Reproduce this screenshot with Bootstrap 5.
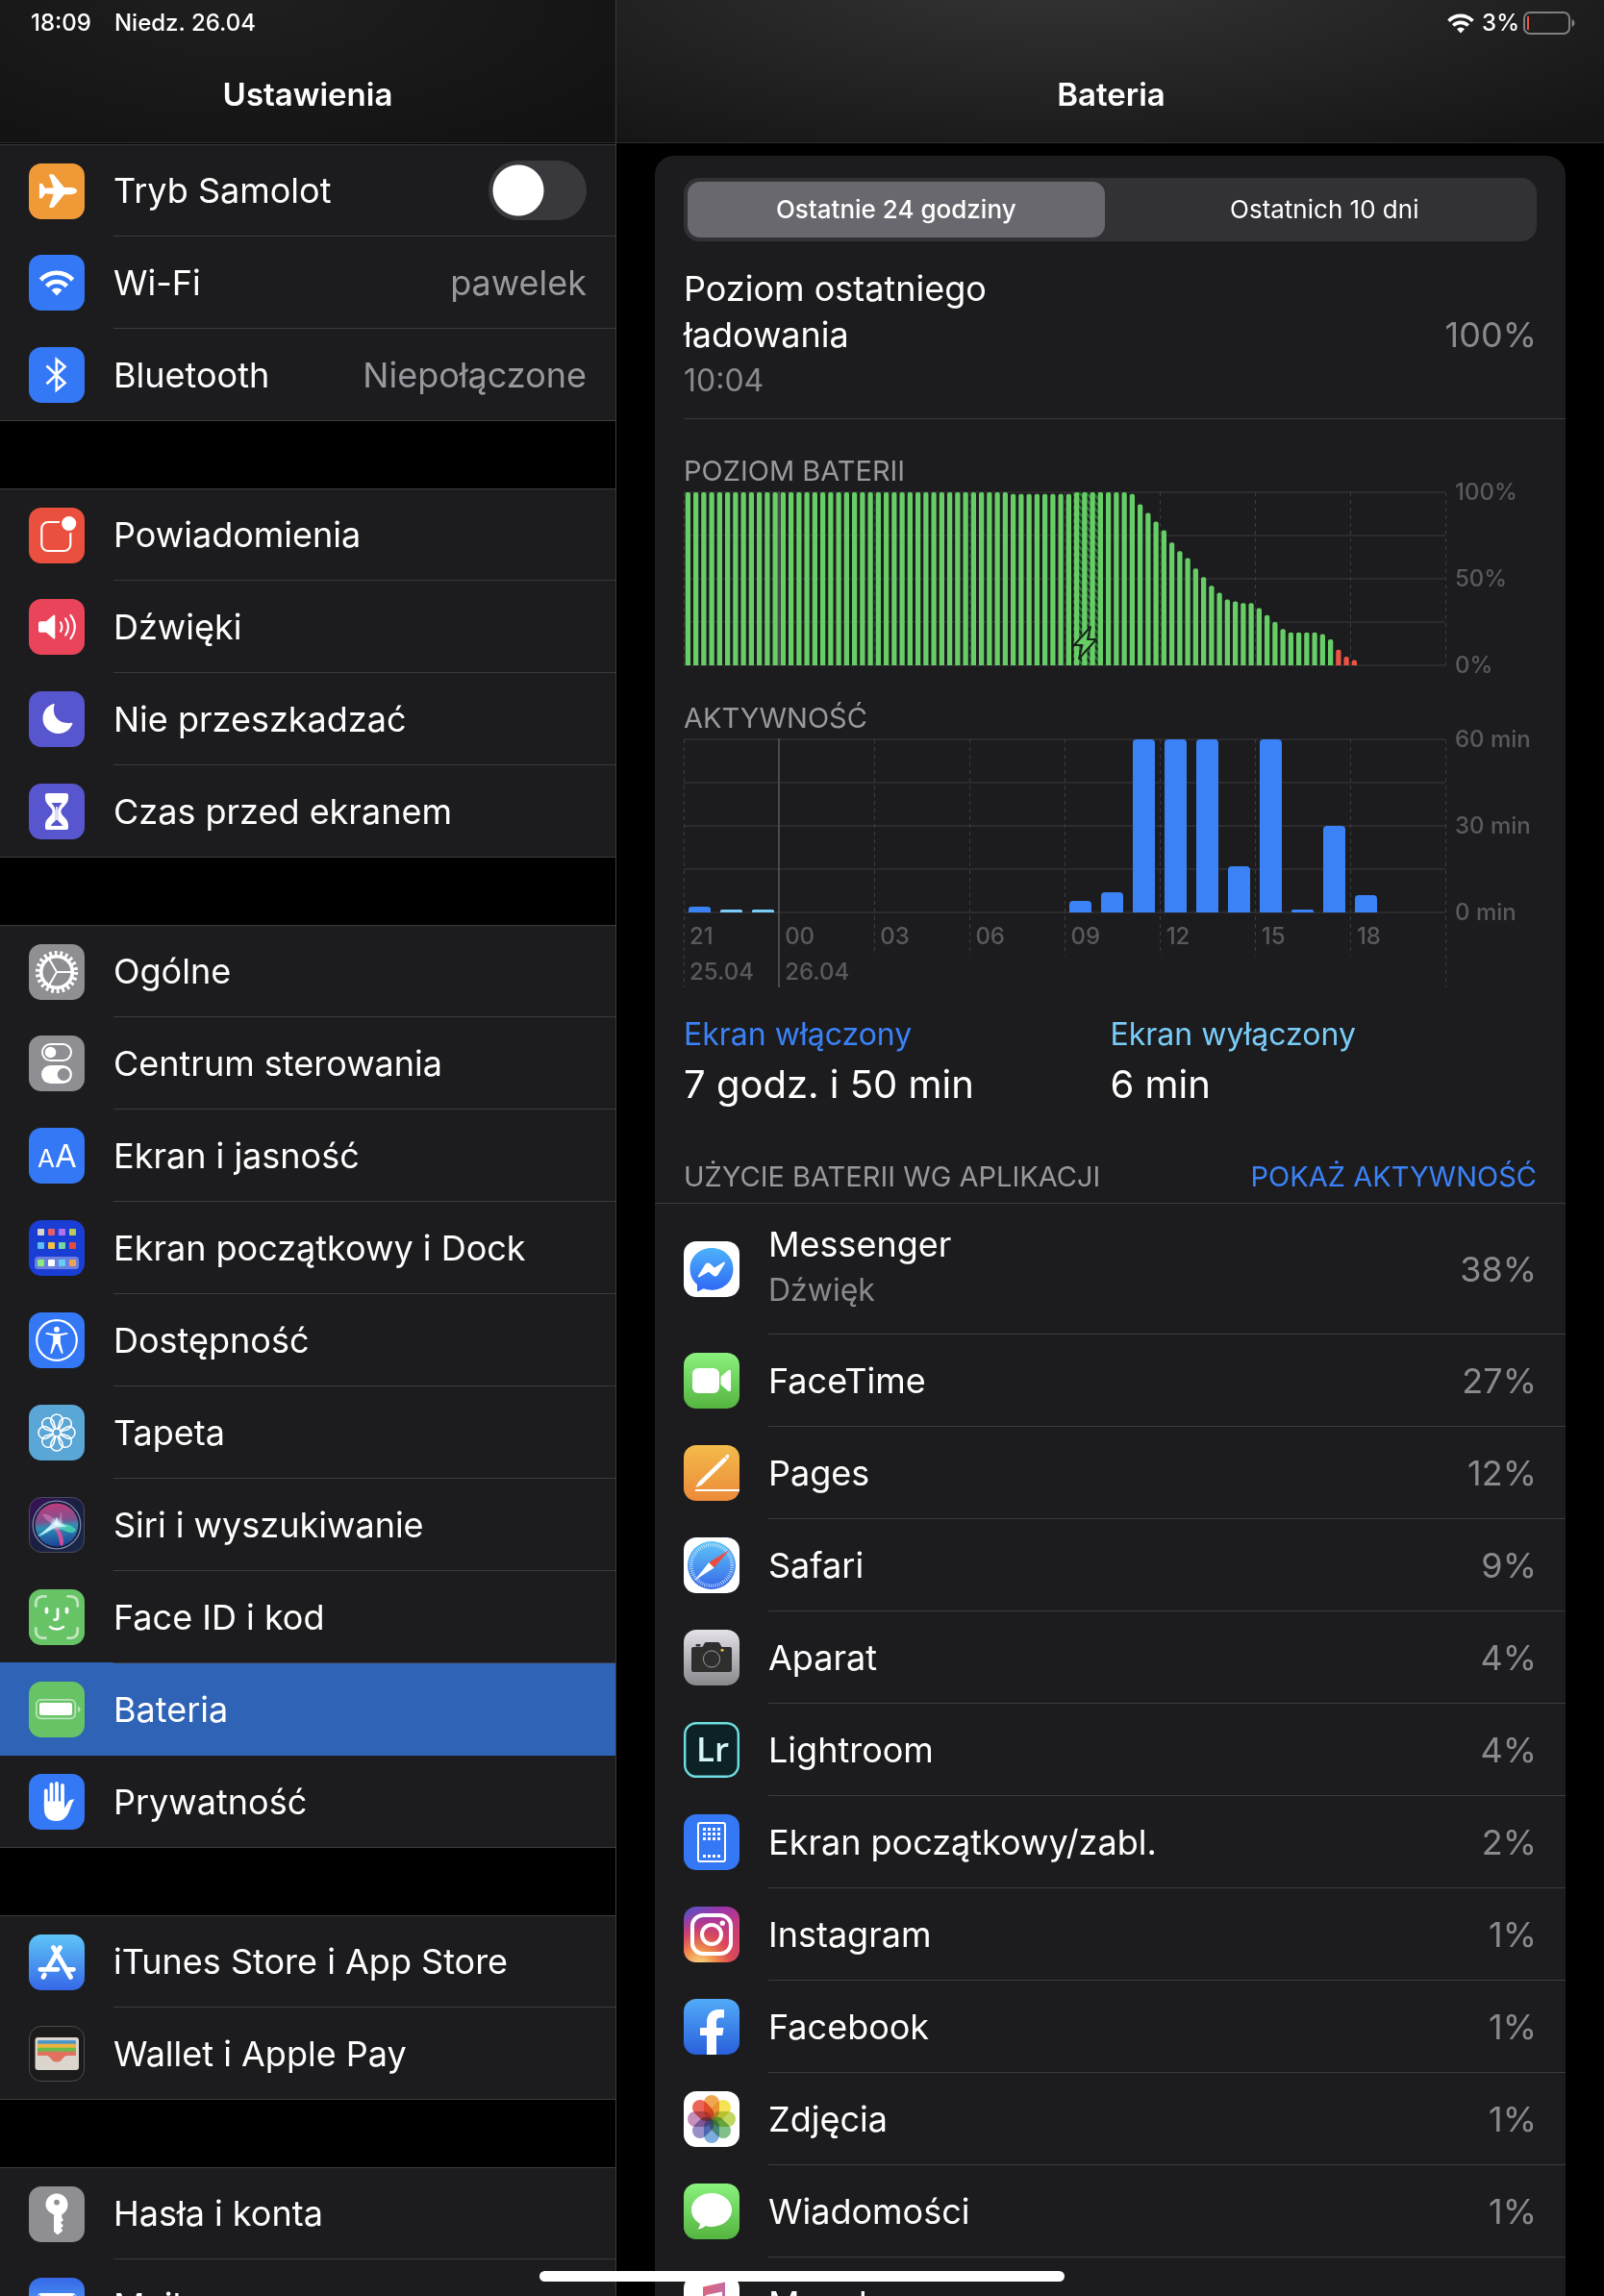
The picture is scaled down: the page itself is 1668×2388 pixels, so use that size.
<!DOCTYPE html>
<html lang="pl" data-bs-theme="dark">
<head>
<meta charset="utf-8">
<meta name="viewport" content="width=device-width, initial-scale=1">
<title>Ustawienia – Bateria</title>
<link href="https://cdn.jsdelivr.net/npm/bootstrap@5.3.0/dist/css/bootstrap.min.css" rel="stylesheet">
<style>
  :root { --line: #3b3b3d; --panel: #1c1c1e; --muted: #98989f; --dim: #8a8a8c; --blue: #3b82f7; --sky: #7accf8; --axis: #5a5a5d; }
  body { background: #000; color: #fff; font-family: Inter, "Liberation Sans", sans-serif; font-size: 36px; line-height: 48px; }
  a, a:hover { color: inherit; text-decoration: none; }

  .pane-side { flex: 0 0 38.43%; border-right: 1px solid var(--line); }
  .top-bar { border-bottom: 1px solid #2b2b2c; padding: 8px 30px 28px 32px; }
  .top-side { background: radial-gradient(ellipse at 40% 0, #1f1f1f, #121212 90%); padding-right: 32px; margin-bottom: 1px; }
  .top-main { background: radial-gradient(ellipse 75% 150% at 45% -20%, #353535, #151515); }
  .status-line { font-size: 24px; line-height: 32px; font-weight: 500; height: 32px; }
  .top-title { font-size: 33px; line-height: 44px; font-weight: 600; margin: 36px 0 0; }

  .tile { width: 58px; height: 58px; flex: none; }
  .settings-group { background: var(--panel); margin-bottom: 70px; }
  .set-row { display: flex; align-items: stretch; gap: 30px; min-height: 96px; padding-left: 30px; color: #fff; }
  .set-row .tile { align-self: center; }
  .set-body { flex: 1; display: flex; align-items: center; justify-content: space-between; padding-right: 30px; border-bottom: 1px solid var(--line); min-width: 0; }
  .settings-group .set-row:first-child { border-top: 1px solid var(--line); }
  .settings-group .set-row:last-child { border-bottom: 1px solid var(--line); }
  .settings-group .set-row:last-child .set-body { border-bottom: 0; }
  .set-row.current { background: #2e63b6; box-shadow: 0 -1px 0 #2e63b6; }
  .set-row.current .set-body { border-color: #2e63b6; }
  .side-value { color: var(--muted); }
  .form-check-input.plane-switch { width: 102px; height: 62px; margin: 0; float: none; border: 0; border-radius: 31px; background-color: #39393d;
    background-image: radial-gradient(circle at 31px 50%, #fff 26px, transparent 27px); background-size: 100% 100%; background-position: 0 0; }

  .main-scroll { padding: 13px 40px 0; }
  .battery-card { background: var(--panel); border-radius: 20px 20px 0 0; padding-top: 23px; }
  .period { background: #323236; border-radius: 16px; padding: 4px; gap: 12px; margin: 0 30px; height: 66px; }
  .period .btn { flex: 1 1 0; border: 0; border-radius: 13px; font-size: 26px; line-height: 34px; padding: 12px 0; color: #fff; }
  .period .btn-check:checked + .btn { background: #69686e; font-weight: 500; }
  .last-charge { margin-left: 30px; padding: 25px 30px 15px 0; border-bottom: 1px solid var(--line); }
  .dim { color: var(--dim); }
  .sub { font-size: 32px; line-height: 44px; }
  .sub.dim { line-height: 48px; }
  .screen-on { color: var(--blue); }
  .screen-off { color: var(--sky); }
  .caption { font-size: 29px; line-height: 42px; color: var(--muted); font-weight: 400; margin: 0; }
  .chart-block { padding: 33px 30px 0; }
  .chart-plot { flex: 1; min-width: 0; }
  .chart-plot svg { display: block; width: 100%; }
  .level-svg { height: 182px; }
  .act-svg { height: 259px; margin-bottom: -77px; }
  .axis-text { font-size: 24px; line-height: 24px; font-weight: 500; color: var(--axis); }
  .y-axis { width: 94px; height: 204px; margin-top: -11px; margin-bottom: -11px; padding-left: 9px; white-space: nowrap; }
  .x-axis { display: grid; grid-template-columns: repeat(8, 1fr); padding-top: 5px; line-height: 37px; height: 79px; }
  .x-axis div { padding-left: 6px; white-space: nowrap; }
  .totals { padding: 25px 30px 0; }
  .big { font-size: 40px; line-height: 52px; margin-top: 4px; }
  .usage-head { padding: 49px 30px 6px; border-bottom: 1px solid var(--line); }
  .link-blue, .link-blue:hover { color: var(--blue); }
  .two-line { min-height: 136px; }
  .two-line .app-text { padding-bottom: 4px; }
  .home-bar { position: fixed; left: 50%; bottom: 15px; width: 546px; height: 11px; margin-left: -273px; border-radius: 6px; background: #fff; }
</style>
</head>
<body class="d-flex vh-100 overflow-hidden">

<svg width="0" height="0" class="position-absolute" aria-hidden="true">
  <defs>
    <linearGradient id="gStore" x1="0" y1="0" x2="0" y2="1"><stop offset="0" stop-color="#5fc5f8"/><stop offset="1" stop-color="#3668e8"/></linearGradient>
    <linearGradient id="gMail" x1="0" y1="0" x2="0" y2="1"><stop offset="0" stop-color="#3668e8"/><stop offset="1" stop-color="#5fc5f8"/></linearGradient>
    <linearGradient id="gGreen" x1="0" y1="0" x2="0" y2="1"><stop offset="0" stop-color="#8af27d"/><stop offset="1" stop-color="#55b440"/></linearGradient>
    <linearGradient id="gPages" x1="0" y1="0" x2="0" y2="1"><stop offset="0" stop-color="#f3bb4b"/><stop offset="1" stop-color="#ec8a39"/></linearGradient>
    <linearGradient id="gCam" x1="0" y1="0" x2="0" y2="1"><stop offset="0" stop-color="#e4e2e8"/><stop offset="1" stop-color="#88878c"/></linearGradient>
    <linearGradient id="gMess" x1="0" y1="0" x2="0" y2="1"><stop offset="0" stop-color="#4db2fa"/><stop offset="1" stop-color="#2f67f6"/></linearGradient>
    <linearGradient id="gFb" x1="0" y1="0" x2="0" y2="1"><stop offset="0" stop-color="#51abf8"/><stop offset="1" stop-color="#2a5fdc"/></linearGradient>
    <linearGradient id="gIg1" x1="0" y1="0" x2=".7" y2="1"><stop offset="0" stop-color="#5158c8"/><stop offset=".35" stop-color="#9c35a8"/><stop offset=".75" stop-color="#cf3f72"/><stop offset="1" stop-color="#d64a5a"/></linearGradient>
    <radialGradient id="gIg2" cx=".28" cy="1.05" r=".95"><stop offset="0" stop-color="#fadc86"/><stop offset=".3" stop-color="#f0914a"/><stop offset=".6" stop-color="#e04c55" stop-opacity=".8"/><stop offset="1" stop-color="#c0308a" stop-opacity="0"/></radialGradient>
    <linearGradient id="gMus" x1="0" y1="0" x2="1" y2="1"><stop offset="0" stop-color="#ee6460"/><stop offset="1" stop-color="#a070d8"/></linearGradient>
    <linearGradient id="gSiriBg" x1="0" y1="0" x2="1" y2="1"><stop offset="0" stop-color="#3a1058"/><stop offset=".5" stop-color="#182040"/><stop offset="1" stop-color="#1c2848"/></linearGradient>
    <linearGradient id="gSiri" x1=".4" y1="0" x2=".5" y2="1"><stop offset="0" stop-color="#c03c7c"/><stop offset=".4" stop-color="#80508e"/><stop offset=".55" stop-color="#2f8fb4"/><stop offset="1" stop-color="#1b3f98"/></linearGradient>
    <radialGradient id="gGlow"><stop offset="0" stop-color="#fff"/><stop offset=".35" stop-color="#d8f4ff" stop-opacity=".7"/><stop offset="1" stop-color="#a0e0ff" stop-opacity="0"/></radialGradient>
    <pattern id="hatch" width="7" height="7" patternUnits="userSpaceOnUse"><rect width="7" height="7" fill="#2f6a38"/><path d="M-1 -1L8 8M-1 6L1 8M6 -1L8 1" stroke="#16241a" stroke-width="2.4"/></pattern>
  </defs>

  <symbol id="i-plane" viewBox="0 0 58 58"><rect width="58" height="58" rx="13" fill="#f09a37"/><path fill="#fff" d="M50 28.600c0 2.200-3.200 3.600-6.500 3.600h-6.700L26.500 44.800c-.6.800-1.200 1.100-2 1.100h-2.400c-.8 0-1.100-.6-.8-1.400l4.500-12.600-8.800-.6-2.700 4.300c-.3.500-.7.700-1.200.700h-1.300c-.6 0-.9-.3-.9-1V21.800c0-.7.3-1 .9-1h1.300c.5 0 .9.200 1.200.700l2.700 4.300 8.800-.6-4.500-12.500c-.3-.8 0-1.400.8-1.400h2.400c.8 0 1.400.3 2 1.100l10.300 12.600h6.700c3.300 0 6.500 1.400 6.500 3.600z"/></symbol>
  <symbol id="i-wifi" viewBox="0 0 58 58"><rect width="58" height="58" rx="13" fill="#3478f6"/><g fill="none" stroke="#fff" stroke-width="4.600"><path d="M12.400 26.100a22.500 22.500 0 0 1 33.200 0"/><path d="M18.600 32.600a14.200 14.200 0 0 1 20.800 0"/></g><path fill="#fff" d="M29 42.500l-5.400-5.800a7.600 7.600 0 0 1 10.800 0z"/></symbol>
  <symbol id="i-bt" viewBox="0 0 58 58"><rect width="58" height="58" rx="13" fill="#3478f6"/><path fill="none" stroke="#fff" stroke-width="2.700" stroke-linejoin="miter" d="M18.500 19.500L37.500 37.200 28.800 44.500V13L37.500 20.300 18.500 38.200"/></symbol>
  <symbol id="i-notif" viewBox="0 0 58 58"><rect width="58" height="58" rx="13" fill="#eb4f3d"/><rect x="13.300" y="15" width="30" height="30" rx="6.500" fill="none" stroke="#fff" stroke-width="2.200"/><circle cx="41.700" cy="16.500" r="10" fill="#eb4f3d"/><circle cx="41.700" cy="16.500" r="7.600" fill="#fff"/></symbol>
  <symbol id="i-sound" viewBox="0 0 58 58"><rect width="58" height="58" rx="13" fill="#ea445a"/><path fill="#fff" d="M10 25.500c0-1.500.8-2.300 2.300-2.300H18l7.300-6.200c1-.9 2-.5 2 .8v22.400c0 1.300-1 1.700-2 .8L18 34.800h-5.700c-1.500 0-2.300-.8-2.300-2.300z"/><path fill="none" stroke="#fff" stroke-width="2.200" stroke-linecap="round" d="M33 24.300q2.800 4.700 0 9.400M38.200 20.500q5.600 8.500 0 17M43.500 17q8.600 12 0 24"/></symbol>
  <symbol id="i-moon" viewBox="0 0 58 58"><rect width="58" height="58" rx="13" fill="#5856ce"/><path fill="#fff" d="M25.600 13.100c.8-.2 1.200.3.900 1.200-2.600 9.400 2.500 20.300 17.800 18.400.9-.1 1.300.5 1 1.300C43 39.800 37.500 44 31 44c-9.300 0-16.500-7-16.500-15.800 0-7.200 4.600-13.200 11.100-15.100z"/></symbol>
  <symbol id="i-hour" viewBox="0 0 58 58"><rect width="58" height="58" rx="13" fill="#5856ce"/><path fill="#fff" d="M19.500 10h19c1.600 0 2.500.8 2.500 2.300v2.600c0 7-7.600 9.300-7.600 14.100S41 36.100 41 43.100v2.600c0 1.500-.9 2.300-2.500 2.300h-19c-1.600 0-2.500-.8-2.500-2.300v-2.600c0-7 7.600-9.300 7.600-14.100S17 21.900 17 14.900v-2.600c0-1.500.9-2.300 2.500-2.300z"/><path fill="#5856ce" d="M23.500 20h11c-1.400 2.600-4.300 4.500-4.300 9v8.500c0 2.500 3.200 2.500 4.900 6.500H22.900c1.700-4 4.900-4 4.900-6.500V29c0-4.500-2.900-6.400-4.300-9z"/><path stroke="#fff" stroke-width="1.600" d="M29 24v14"/></symbol>
  <symbol id="i-gear" viewBox="0 0 58 58"><rect width="58" height="58" rx="13" fill="#8e8e93"/><g fill="none" stroke="#fff"><circle cx="29" cy="29" r="19.800" stroke-width="4.600" stroke-dasharray="2.800 2.855"/><circle cx="29" cy="29" r="16.300" stroke-width="3.600"/><path stroke-width="2" d="M29 29h15M29 29l-7.500-13M29 29l-7.500 13"/></g></symbol>
  <symbol id="i-toggles" viewBox="0 0 58 58"><rect width="58" height="58" rx="13" fill="#8e8e93"/><rect x="14" y="9" width="30" height="17" rx="8.500" fill="none" stroke="#fff" stroke-width="2"/><circle cx="22.500" cy="17.500" r="5.800" fill="#fff"/><rect x="13" y="31" width="32" height="19" rx="9.500" fill="#fff"/><circle cx="36.200" cy="40.500" r="6.500" fill="#8e8e93"/></symbol>
  <symbol id="i-home" viewBox="0 0 58 58"><rect width="58" height="58" rx="13" fill="#1a3dd4"/><rect x="6" y="38" width="46" height="13" rx="3.500" fill="#6a80e0"/><g><rect x="9" y="9" width="7" height="7" rx="1" fill="#d8d4cc"/><rect x="20" y="9" width="7" height="7" rx="1" fill="#e85c66"/><rect x="31" y="9" width="7" height="7" rx="1" fill="#b070f0"/><rect x="42" y="9" width="7" height="7" rx="1" fill="#b9cc52"/><rect x="9" y="23" width="7" height="7" rx="1" fill="#5dbdf5"/><rect x="20" y="23" width="7" height="7" rx="1" fill="#f6c23e"/><rect x="31" y="23" width="7" height="7" rx="1" fill="#74d6a4"/><rect x="42" y="23" width="7" height="7" rx="1" fill="#e84b3c"/><rect x="9" y="41" width="7" height="7" rx="1" fill="#8aec7c"/><rect x="20" y="41" width="7" height="7" rx="1" fill="#fff"/><rect x="31" y="41" width="7" height="7" rx="1" fill="#64ccf5"/><rect x="42" y="41" width="7" height="7" rx="1" fill="#f0a050"/></g></symbol>
  <symbol id="i-access" viewBox="0 0 58 58"><rect width="58" height="58" rx="13" fill="#3478f6"/><circle cx="29" cy="29" r="20.800" fill="none" stroke="#fff" stroke-width="2.200"/><circle cx="29" cy="17.700" r="2.900" fill="#fff"/><path fill="#fff" d="M18.600 21l7.400 1.200h6l7.400-1.200c1.300-.2 1.600 1.500.4 1.800l-7 1.500v6.400l2.700 11c.3 1.300-1.400 1.700-1.800.6L29.900 33h-1.800l-3.800 9.300c-.5 1.100-2.100.7-1.800-.6l2.700-11v-6.400l-7-1.500c-1.200-.3-.9-2 .4-1.800z"/></symbol>
  <symbol id="i-wall" viewBox="0 0 58 58"><rect width="58" height="58" rx="13" fill="#59a6d7"/><g fill="none" stroke="#fff" stroke-width="1.600"><g id="pp"><path id="pt" d="M27 25.500L23 18.200A6.300 6.300 0 1 1 35 18.200L31 25.500"/><use href="#pt" transform="rotate(45 29 29)"/><use href="#pt" transform="rotate(90 29 29)"/><use href="#pt" transform="rotate(135 29 29)"/></g><use href="#pp" transform="rotate(180 29 29)"/><circle cx="29" cy="29" r="4"/></g></symbol>
  <symbol id="i-siri" viewBox="0 0 58 58"><rect x=".5" y=".5" width="57" height="57" rx="12.500" fill="url(#gSiriBg)" stroke="#4a4a5c"/><circle cx="29" cy="29" r="24.800" fill="#141c34" stroke="#7f86b0" stroke-width="1.300"/><circle cx="29" cy="29" r="22.500" fill="url(#gSiri)"/><path fill="#7fe6ee" opacity=".75" d="M29 27L9 40c3 3 12-5 20-9z"/><path fill="#4fdcb4" opacity=".75" d="M28 27c8 0 16 1 21 7-1 5-10 4-19-3z"/><path fill="#e84f98" opacity=".85" d="M27 27c4 6 10 12 9 22-1 3-4 2-4-1-1-7-3-13-7-18z"/><path fill="#f8a0cc" opacity=".4" d="M14 18c6-1 12 3 17 10L33 15c3 3 1 10 0 15-6 0-15-4-19-12z"/><path fill="#dff" opacity=".8" d="M11 40L27 25l2-4 2 5 9 5-11 0z"/><circle cx="29" cy="28" r="8" fill="url(#gGlow)"/></symbol>
  <symbol id="i-face" viewBox="0 0 58 58"><rect width="58" height="58" rx="13" fill="#67c466"/><g fill="none" stroke-linecap="round"><path stroke="#c0e6bf" stroke-width="2.800" d="M7.300 17.500V14.300a7 7 0 0 1 7-7h3.200M40.500 7.300h3.200a7 7 0 0 1 7 7v3.200M50.700 40.500v3.200a7 7 0 0 1-7 7h-3.200M17.500 50.700h-3.200a7 7 0 0 1-7-7v-3.200"/><path stroke="#fff" stroke-width="3.600" d="M18.500 20.200v3.600M39.500 20.200v3.600"/><path stroke="#fff" stroke-width="2.700" d="M30 20.500v9c0 1.500-1 2.200-3.500 2.200"/><path stroke="#fff" stroke-width="2.500" d="M22 39c4 3.400 10 3.400 14 0"/></g></symbol>
  <symbol id="i-batt" viewBox="0 0 58 58"><rect width="58" height="58" rx="13" fill="#67c466"/><rect x="7.800" y="18.800" width="40.500" height="19.500" rx="5" fill="none" stroke="#b8e3b7" stroke-width="1.800"/><rect x="11" y="22" width="34" height="13" rx="2" fill="#fff"/><path fill="#b8e3b7" d="M51 25.200c1.600.8 2.600 2 2.600 3.400s-1 2.600-2.600 3.400z"/></symbol>
  <symbol id="i-hand" viewBox="0 0 58 58"><rect width="58" height="58" rx="13" fill="#3478f6"/><g fill="none" stroke="#fff" stroke-width="3.800" stroke-linecap="round"><path d="M17.800 17.500V34M23.500 11v20M29 10v20M35 12v20"/></g><path fill="#fff" d="M15.900 28.500H37v7.300l4.300-7.200c1.200-2 3.700-2.500 6.200-2-2.400 3-3.500 6.600-5.200 11.200C39.800 44.500 36.500 49 28.500 49c-8 0-12.600-4.500-12.600-12.500z"/></symbol>
  <symbol id="i-store" viewBox="0 0 58 58"><rect width="58" height="58" rx="13" fill="url(#gStore)"/><g stroke="#fff" stroke-width="4.800" stroke-linecap="round" fill="none"><path d="M32.500 13.500L19.500 36M25.500 13.500L43.500 44.500M11.800 36.300H30M40 36.300H46.500M16.200 42L15 44.300"/></g></symbol>
  <symbol id="i-wallet" viewBox="0 0 58 58"><rect x=".5" y=".5" width="57" height="57" rx="12.500" fill="#1b1b1c" stroke="#4c4c4e"/><rect x="6.500" y="12" width="45.500" height="34" rx="3" fill="#dad6ce"/><path fill="#4c97c8" d="M9 18v-1.500q0-1.500 1.500-1.500h37q1.500 0 1.500 1.500V20H9z"/><path fill="#efb23f" d="M9 19.500q0-.7.800-.7h38.400q.8 0 .8.700V24H9z"/><path fill="#6bbb4b" d="M9 23.500q0-.7.800-.7h38.400q.8 0 .8.700V28H9z"/><path fill="#e2705f" d="M9 27.500q0-.7.800-.7h38.400q.8 0 .8.700V31H41c-3 0-4 .5-6 3.500-2 2.500-4 3-6 3s-4-.5-6-3c-2-3-3-3.500-6-3.500H9z"/></symbol>
  <symbol id="i-key" viewBox="0 0 58 58"><rect width="58" height="58" rx="13" fill="#8e8e93"/><path fill="#fff" fill-rule="evenodd" d="M29 7.500c6.400 0 11.500 5 11.500 11.500 0 4.800-2.600 8.400-6.200 10.200v3.300l1.700 2.400-3 2.900 3 3-2.600 2.700 2 2.500-5.400 4.500-4-3.500V29.200c-4.800-1.800-8.500-5.400-8.500-10.200C17.500 12.500 22.600 7.500 29 7.500zm0 6.200a2.900 2.900 0 1 0 0 5.800 2.900 2.900 0 0 0 0-5.800z"/></symbol>
  <symbol id="i-mail" viewBox="0 0 58 58"><rect width="58" height="58" rx="13" fill="url(#gMail)"/><rect x="9" y="16" width="40" height="27" rx="4" fill="#fff"/><path d="M10 18l19 16 19-16" fill="none" stroke="#4a90f0" stroke-width="1.600"/></symbol>

  <symbol id="i-mess" viewBox="0 0 58 58"><rect width="58" height="58" rx="13" fill="#fff"/><path fill="url(#gMess)" d="M29 7C16 7 6.500 16.500 6.500 28.500c0 7 2.700 12.500 7.500 16.500v6.300c0 .8.700 1 1.300.7l5.200-2.700c2.700.9 5.500 1.400 8.500 1.400 13 0 22.500-9.500 22.500-22S42 7 29 7z"/><path fill="#fff" d="M15 36l7.400-12c1.200-1.800 3.500-2 5-.8l4.500 4.200 9.500-5.600c1-.6 2 .4 1.400 1.300L35.500 35c-1.200 1.700-3.300 2-4.800.7l-4.800-4-9.500 5.500c-1 .6-2-.3-1.400-1.200z"/></symbol>
  <symbol id="i-ft" viewBox="0 0 58 58"><rect width="58" height="58" rx="13" fill="url(#gGreen)"/><rect x="9" y="16" width="28" height="26" rx="6" fill="#fff"/><path fill="#fff" d="M38.500 25l7.300-6.500c1.600-1.400 3.200-.7 3.200 1.200v18.600c0 1.900-1.600 2.600-3.200 1.200L38.500 33z"/></symbol>
  <symbol id="i-pages" viewBox="0 0 58 58"><rect width="58" height="58" rx="13" fill="url(#gPages)"/><path fill="#fff" d="M12 46h46v2H12zM12.300 44l3-5.500L42 12.400l3.200 3.200L18.600 41.500z"/><path fill="#fff" d="M42.700 11.700l1.500-1.400c1-.9 2-.8 2.600-.2.700.7.800 1.700-.2 2.700L45.900 15z"/></symbol>
  <symbol id="i-safari" viewBox="0 0 58 58"><rect width="58" height="58" rx="13" fill="#fff"/><circle cx="29" cy="29" r="25" fill="url(#gStore)"/><circle cx="29" cy="29" r="21.300" fill="none" stroke="#e4f2fd" stroke-width="3.600" stroke-dasharray=".7 1.530"/><path fill="#fff" d="M11 45L26.300 26l5.400 5.400z"/><path fill="#ea4d3d" d="M47.500 13L26.300 26l5.400 5.400z"/></symbol>
  <symbol id="i-cam" viewBox="0 0 58 58"><rect width="58" height="58" rx="13" fill="url(#gCam)"/><path fill="#2e2e2f" d="M10 18h8.500c1.500 0 2-2.200 3.200-4 .5-.8 1.200-1 2-1h11.600c.8 0 1.500.2 2 1 1.200 1.800 1.700 4 3.200 4H48q2 0 2 2v22q0 2-2 2H10q-2 0-2-2V20q0-2 2-2z"/><rect x="12.500" y="15" width="5" height="2.400" rx="1" fill="#2e2e2f"/><circle cx="29" cy="30.500" r="8.600" fill="none" stroke="#9a9a9c" stroke-width="1"/><circle cx="40" cy="21.300" r="1.500" fill="#f2c53d"/></symbol>
  <symbol id="i-lock" viewBox="0 0 58 58"><rect width="58" height="58" rx="13" fill="#3478f6"/><rect x="15" y="9" width="28" height="40" rx="2" fill="none" stroke="#fff" stroke-width="2"/><g stroke="#fff" stroke-width="3" stroke-dasharray="3 2"><path d="M20 15.500h18M20 20.500h18M20 25.500h18M20 43.500h18"/></g></symbol>
  <symbol id="i-ig" viewBox="0 0 58 58"><rect width="58" height="58" rx="13" fill="url(#gIg1)"/><rect width="58" height="58" rx="13" fill="url(#gIg2)"/><g fill="none" stroke="#fff" stroke-width="4"><rect x="9" y="9" width="40" height="40" rx="11"/><circle cx="29" cy="29" r="10"/></g><circle cx="40.300" cy="17.300" r="2.700" fill="#fff"/></symbol>
  <symbol id="i-fb" viewBox="0 0 58 58"><rect width="58" height="58" rx="13" fill="url(#gFb)"/><path fill="#fff" d="M24 58V38h-7v-8h7v-5.500C24 16 29 11 36.500 11H42v8.500h-4c-2.700 0-4 1.300-4 3.800V30h7.500l-1.200 8H34v20z"/></symbol>
  <symbol id="i-photos" viewBox="0 0 58 58"><rect width="58" height="58" rx="13" fill="#fff"/><g opacity=".88" style="isolation:isolate"><rect x="21" y="4" width="16" height="25" rx="8" fill="#f09a3a" style="mix-blend-mode:multiply"/><rect x="21" y="4" width="16" height="25" rx="8" fill="#f3e13e" transform="rotate(45 29 29)" style="mix-blend-mode:multiply"/><rect x="21" y="4" width="16" height="25" rx="8" fill="#b9d24a" transform="rotate(90 29 29)" style="mix-blend-mode:multiply"/><rect x="21" y="4" width="16" height="25" rx="8" fill="#6fb878" transform="rotate(135 29 29)" style="mix-blend-mode:multiply"/><rect x="21" y="4" width="16" height="25" rx="8" fill="#6aa2d8" transform="rotate(180 29 29)" style="mix-blend-mode:multiply"/><rect x="21" y="4" width="16" height="25" rx="8" fill="#8a80c0" transform="rotate(225 29 29)" style="mix-blend-mode:multiply"/><rect x="21" y="4" width="16" height="25" rx="8" fill="#c080b4" transform="rotate(270 29 29)" style="mix-blend-mode:multiply"/><rect x="21" y="4" width="16" height="25" rx="8" fill="#e8503e" transform="rotate(315 29 29)" style="mix-blend-mode:multiply"/></g></symbol>
  <symbol id="i-msg" viewBox="0 0 58 58"><rect width="58" height="58" rx="13" fill="url(#gGreen)"/><path fill="#fff" d="M29 10C17.400 10 8 17.800 8 27.500c0 6 3.600 11.200 9 14.300-.2 2.200-.9 4-2.200 5.400 3.200.2 5.800-1 7.700-3.200 2 .6 4.200.9 6.500.9 11.600 0 21-7.800 21-17.400S40.600 10 29 10z"/></symbol>
  <symbol id="i-music" viewBox="0 0 58 58"><rect width="58" height="58" rx="13" fill="#fff"/><path fill="url(#gMus)" d="M20 11.500L43 6.500V38c0 7-10 8.500-10 2.500 0-3.500 3-4.500 7-5.300V16.500l-17 3.500v23c0 7-10 8.500-10 2.500 0-3.500 3-4.500 7-5.300z"/></symbol>
</svg>

<aside class="pane-side d-flex flex-column overflow-hidden">
  <header class="top-bar top-side flex-shrink-0">
    <div class="status-line d-flex"><span>18:09</span><span class="ms-4">Niedz. 26.04</span></div>
    <h1 class="top-title text-center">Ustawienia</h1>
  </header>
  <nav>
    <div class="settings-group">
      <div class="set-row"><svg class="tile"><use href="#i-plane"/></svg><div class="set-body"><label for="plane">Tryb Samolot</label><input class="form-check-input plane-switch" type="checkbox" role="switch" id="plane"></div></div>
      <a class="set-row" href="#"><svg class="tile"><use href="#i-wifi"/></svg><span class="set-body"><span>Wi-Fi</span><span class="side-value">pawelek</span></span></a>
      <a class="set-row" href="#"><svg class="tile"><use href="#i-bt"/></svg><span class="set-body"><span>Bluetooth</span><span class="side-value">Niepołączone</span></span></a>
    </div>
    <div class="settings-group">
      <a class="set-row" href="#"><svg class="tile"><use href="#i-notif"/></svg><span class="set-body">Powiadomienia</span></a>
      <a class="set-row" href="#"><svg class="tile"><use href="#i-sound"/></svg><span class="set-body">Dźwięki</span></a>
      <a class="set-row" href="#"><svg class="tile"><use href="#i-moon"/></svg><span class="set-body">Nie przeszkadzać</span></a>
      <a class="set-row" href="#"><svg class="tile"><use href="#i-hour"/></svg><span class="set-body">Czas przed ekranem</span></a>
    </div>
    <div class="settings-group">
      <a class="set-row" href="#"><svg class="tile"><use href="#i-gear"/></svg><span class="set-body">Ogólne</span></a>
      <a class="set-row" href="#"><svg class="tile"><use href="#i-toggles"/></svg><span class="set-body">Centrum sterowania</span></a>
      <a class="set-row" href="#"><svg class="tile" viewBox="0 0 58 58" aria-hidden="true"><rect width="58" height="58" rx="13" fill="#3478f6"/><text x="9" y="41" font-size="26" fill="#fff">A<tspan font-size="33">A</tspan></text></svg><span class="set-body">Ekran i jasność</span></a>
      <a class="set-row" href="#"><svg class="tile"><use href="#i-home"/></svg><span class="set-body">Ekran początkowy i Dock</span></a>
      <a class="set-row" href="#"><svg class="tile"><use href="#i-access"/></svg><span class="set-body">Dostępność</span></a>
      <a class="set-row" href="#"><svg class="tile"><use href="#i-wall"/></svg><span class="set-body">Tapeta</span></a>
      <a class="set-row" href="#"><svg class="tile"><use href="#i-siri"/></svg><span class="set-body">Siri i wyszukiwanie</span></a>
      <a class="set-row" href="#"><svg class="tile"><use href="#i-face"/></svg><span class="set-body">Face ID i kod</span></a>
      <a class="set-row current" href="#" aria-current="page"><svg class="tile"><use href="#i-batt"/></svg><span class="set-body">Bateria</span></a>
      <a class="set-row" href="#"><svg class="tile"><use href="#i-hand"/></svg><span class="set-body">Prywatność</span></a>
    </div>
    <div class="settings-group">
      <a class="set-row" href="#"><svg class="tile"><use href="#i-store"/></svg><span class="set-body">iTunes Store i App Store</span></a>
      <a class="set-row" href="#"><svg class="tile"><use href="#i-wallet"/></svg><span class="set-body">Wallet i Apple Pay</span></a>
    </div>
    <div class="settings-group mb-0">
      <a class="set-row" href="#"><svg class="tile"><use href="#i-key"/></svg><span class="set-body">Hasła i konta</span></a>
      <a class="set-row" href="#"><svg class="tile"><use href="#i-mail"/></svg><span class="set-body">Mail</span></a>
    </div>
  </nav>
</aside>

<main class="flex-grow-1 d-flex flex-column overflow-hidden">
  <header class="top-bar top-main flex-shrink-0">
    <div class="status-line d-flex justify-content-end align-items-center">
      <svg width="28" height="22" viewBox="0 0 28 22" class="me-2" aria-hidden="true"><g fill="none" stroke="#fff" stroke-width="3.600"><path d="M1.500 8.700a17.300 17.300 0 0 1 25 0"/><path d="M6.200 13.600a11 11 0 0 1 15.600 0"/></g><path fill="#fff" d="M14 21.500l-4-4.300a5.600 5.600 0 0 1 8 0z"/></svg>
      <span>3%</span>
      <svg width="54" height="26" viewBox="0 0 54 26" class="ms-1" aria-hidden="true"><rect x="1" y="2" width="47" height="22" rx="6" fill="none" stroke="#808080" stroke-width="2"/><path fill="#808080" d="M50.500 9c1.800.7 3 2.200 3 4s-1.200 3.300-3 4z"/><rect x="4" y="6" width="2" height="14" fill="#ec5545"/></svg>
    </div>
    <h2 class="top-title text-center">Bateria</h2>
  </header>

  <div class="main-scroll">
    <section class="battery-card">
      <div class="period d-flex" role="group" aria-label="Okres">
        <input type="radio" class="btn-check" name="period" id="p24" checked><label class="btn" for="p24">Ostatnie 24 godziny</label>
        <input type="radio" class="btn-check" name="period" id="p10"><label class="btn" for="p10">Ostatnich 10 dni</label>
      </div>

      <div class="last-charge d-flex justify-content-between align-items-center">
        <div class="w-50"><div>Poziom ostatniego ładowania</div><div class="sub dim">10:04</div></div>
        <div class="dim">100%</div>
      </div>

      <div class="chart-block">
        <h3 class="caption">POZIOM BATERII</h3>
        <div class="d-flex">
          <div class="chart-plot"><svg class="level-svg" id="level" viewBox="0 0 793 182" preserveAspectRatio="none" role="img" aria-label="Poziom baterii"></svg></div>
          <div class="y-axis axis-text d-flex flex-column justify-content-between"><span>100%</span><span>50%</span><span>0%</span></div>
        </div>
      </div>

      <div class="chart-block">
        <h3 class="caption">AKTYWNOŚĆ</h3>
        <div class="d-flex">
          <div class="chart-plot">
            <svg class="act-svg" id="activity" viewBox="0 0 793 259" preserveAspectRatio="none" role="img" aria-label="Aktywność"></svg>
            <div class="x-axis axis-text">
              <div>21<br>25.04</div><div>00<br>26.04</div><div>03</div><div>06</div><div>09</div><div>12</div><div>15</div><div>18</div>
            </div>
          </div>
          <div class="y-axis axis-text d-flex flex-column justify-content-between"><span>60 min</span><span>30 min</span><span>0 min</span></div>
        </div>
      </div>

      <div class="totals d-flex">
        <div class="w-50"><div class="sub screen-on">Ekran włączony</div><div class="big">7 godz. i 50 min</div></div>
        <div class="w-50"><div class="sub screen-off">Ekran wyłączony</div><div class="big">6 min</div></div>
      </div>

      <div class="usage-head d-flex justify-content-between">
        <h3 class="caption">UŻYCIE BATERII WG APLIKACJI</h3>
        <a href="#" class="caption link-blue">POKAŻ AKTYWNOŚĆ</a>
      </div>

      <div>
        <div class="set-row two-line"><svg class="tile"><use href="#i-mess"/></svg><div class="set-body"><div class="app-text">Messenger<div class="sub dim">Dźwięk</div></div><span class="dim">38%</span></div></div>
        <div class="set-row"><svg class="tile"><use href="#i-ft"/></svg><div class="set-body"><span>FaceTime</span><span class="dim">27%</span></div></div>
        <div class="set-row"><svg class="tile"><use href="#i-pages"/></svg><div class="set-body"><span>Pages</span><span class="dim">12%</span></div></div>
        <div class="set-row"><svg class="tile"><use href="#i-safari"/></svg><div class="set-body"><span>Safari</span><span class="dim">9%</span></div></div>
        <div class="set-row"><svg class="tile"><use href="#i-cam"/></svg><div class="set-body"><span>Aparat</span><span class="dim">4%</span></div></div>
        <div class="set-row"><svg class="tile" viewBox="0 0 58 58" aria-hidden="true"><rect x="1.200" y="1.200" width="55.600" height="55.600" rx="12" fill="#0c2224" stroke="#6ee0e2" stroke-width="2.400"/><text x="13" y="41" font-family="Open Sans" font-weight="600" font-size="35" fill="#d6f6fa">Lr</text></svg><div class="set-body"><span>Lightroom</span><span class="dim">4%</span></div></div>
        <div class="set-row"><svg class="tile"><use href="#i-lock"/></svg><div class="set-body"><span>Ekran początkowy/zabl.</span><span class="dim">2%</span></div></div>
        <div class="set-row"><svg class="tile"><use href="#i-ig"/></svg><div class="set-body"><span>Instagram</span><span class="dim">1%</span></div></div>
        <div class="set-row"><svg class="tile"><use href="#i-fb"/></svg><div class="set-body"><span>Facebook</span><span class="dim">1%</span></div></div>
        <div class="set-row"><svg class="tile"><use href="#i-photos"/></svg><div class="set-body"><span>Zdjęcia</span><span class="dim">1%</span></div></div>
        <div class="set-row"><svg class="tile"><use href="#i-msg"/></svg><div class="set-body"><span>Wiadomości</span><span class="dim">1%</span></div></div>
        <div class="set-row"><svg class="tile"><use href="#i-music"/></svg><div class="set-body"><span>Muzyka</span></div></div>
      </div>
    </section>
  </div>
</main>

<div class="home-bar"></div>

<script src="https://cdn.jsdelivr.net/npm/bootstrap@5.3.0/dist/js/bootstrap.bundle.min.js"></script>
<script>
  // Grid shared by both charts: five horizontal lines, a vertical every three hours, midnight solid.
  function grid(minorEnd, majorEnd) {
    let s = '';
    for (let i = 0; i < 5; i++) s += `<rect x="0" y="${i * 45}" width="792" height="2" fill="#2b2b2d"/>`;
    for (let i = 0; i < 9; i++) {
      const x = i * 99, end = i < 2 || i === 8 ? majorEnd : minorEnd;
      s += i === 1
        ? `<rect x="${x - 1}" y="0" width="2" height="${end}" fill="#4a4a4c"/>`
        : `<path d="M${x + .5} 1V${end}" stroke="#3c3c3e" stroke-dasharray="4 4"/>`;
    }
    return s;
  }
  function bar(x, w, h, r, fill) {
    r = Math.min(r, h / 2);
    return `<path fill="${fill}" d="M${x} 181V${181 - h + r}q0 ${-r} ${r} ${-r}h${w - 2 * r}q${r} 0 ${r} ${r}V181z"/>`;
  }

  // Charge level for each quarter of an hour, in per cent.
  const level = [
    ...Array(41).fill(100), ...Array(8).fill(99), ...Array(7).fill(100),
    99, 93, 88, 83, 78, 71, 66, 62, 56, 51, 46, 42, 38, 37, 36, 36,
    33, 29, 25, 21, 19, 19, 19, 19, 18, 15, 9, 5, 3
  ];
  let s = grid(181, 181) + '<rect x="405" y="1" width="27" height="180" fill="url(#hatch)"/>';
  level.forEach((v, i) => s += bar(i * 8.25 + 1.75, 5.25, v * 1.8, 2, v < 10 ? '#ec5545' : '#67ce67'));
  s += '<path d="M423 141L406 160h8.500l-3.500 14 18-20h-9z" fill="#67ce67" stroke="#16241a" stroke-width="2" stroke-linejoin="round"/>';
  document.getElementById('level').innerHTML = s;

  // Minutes of use by hour, counted from 21:00; "off" marks time with the screen off.
  const activity = [[0, 2], [1, 1, 'off'], [2, 1, 'off'], [12, 4], [13, 7], [14, 60], [15, 60], [16, 60], [17, 16], [18, 60], [19, 1], [20, 30], [21, 6]];
  document.getElementById('activity').innerHTML = grid(226, 259) +
    activity.map(([h, m, off]) => bar(h * 33 + 5, 23, Math.max(m * 3, 3), 4, off ? '#7accf8' : '#3b82f7')).join('');
</script>
</body>
</html>
